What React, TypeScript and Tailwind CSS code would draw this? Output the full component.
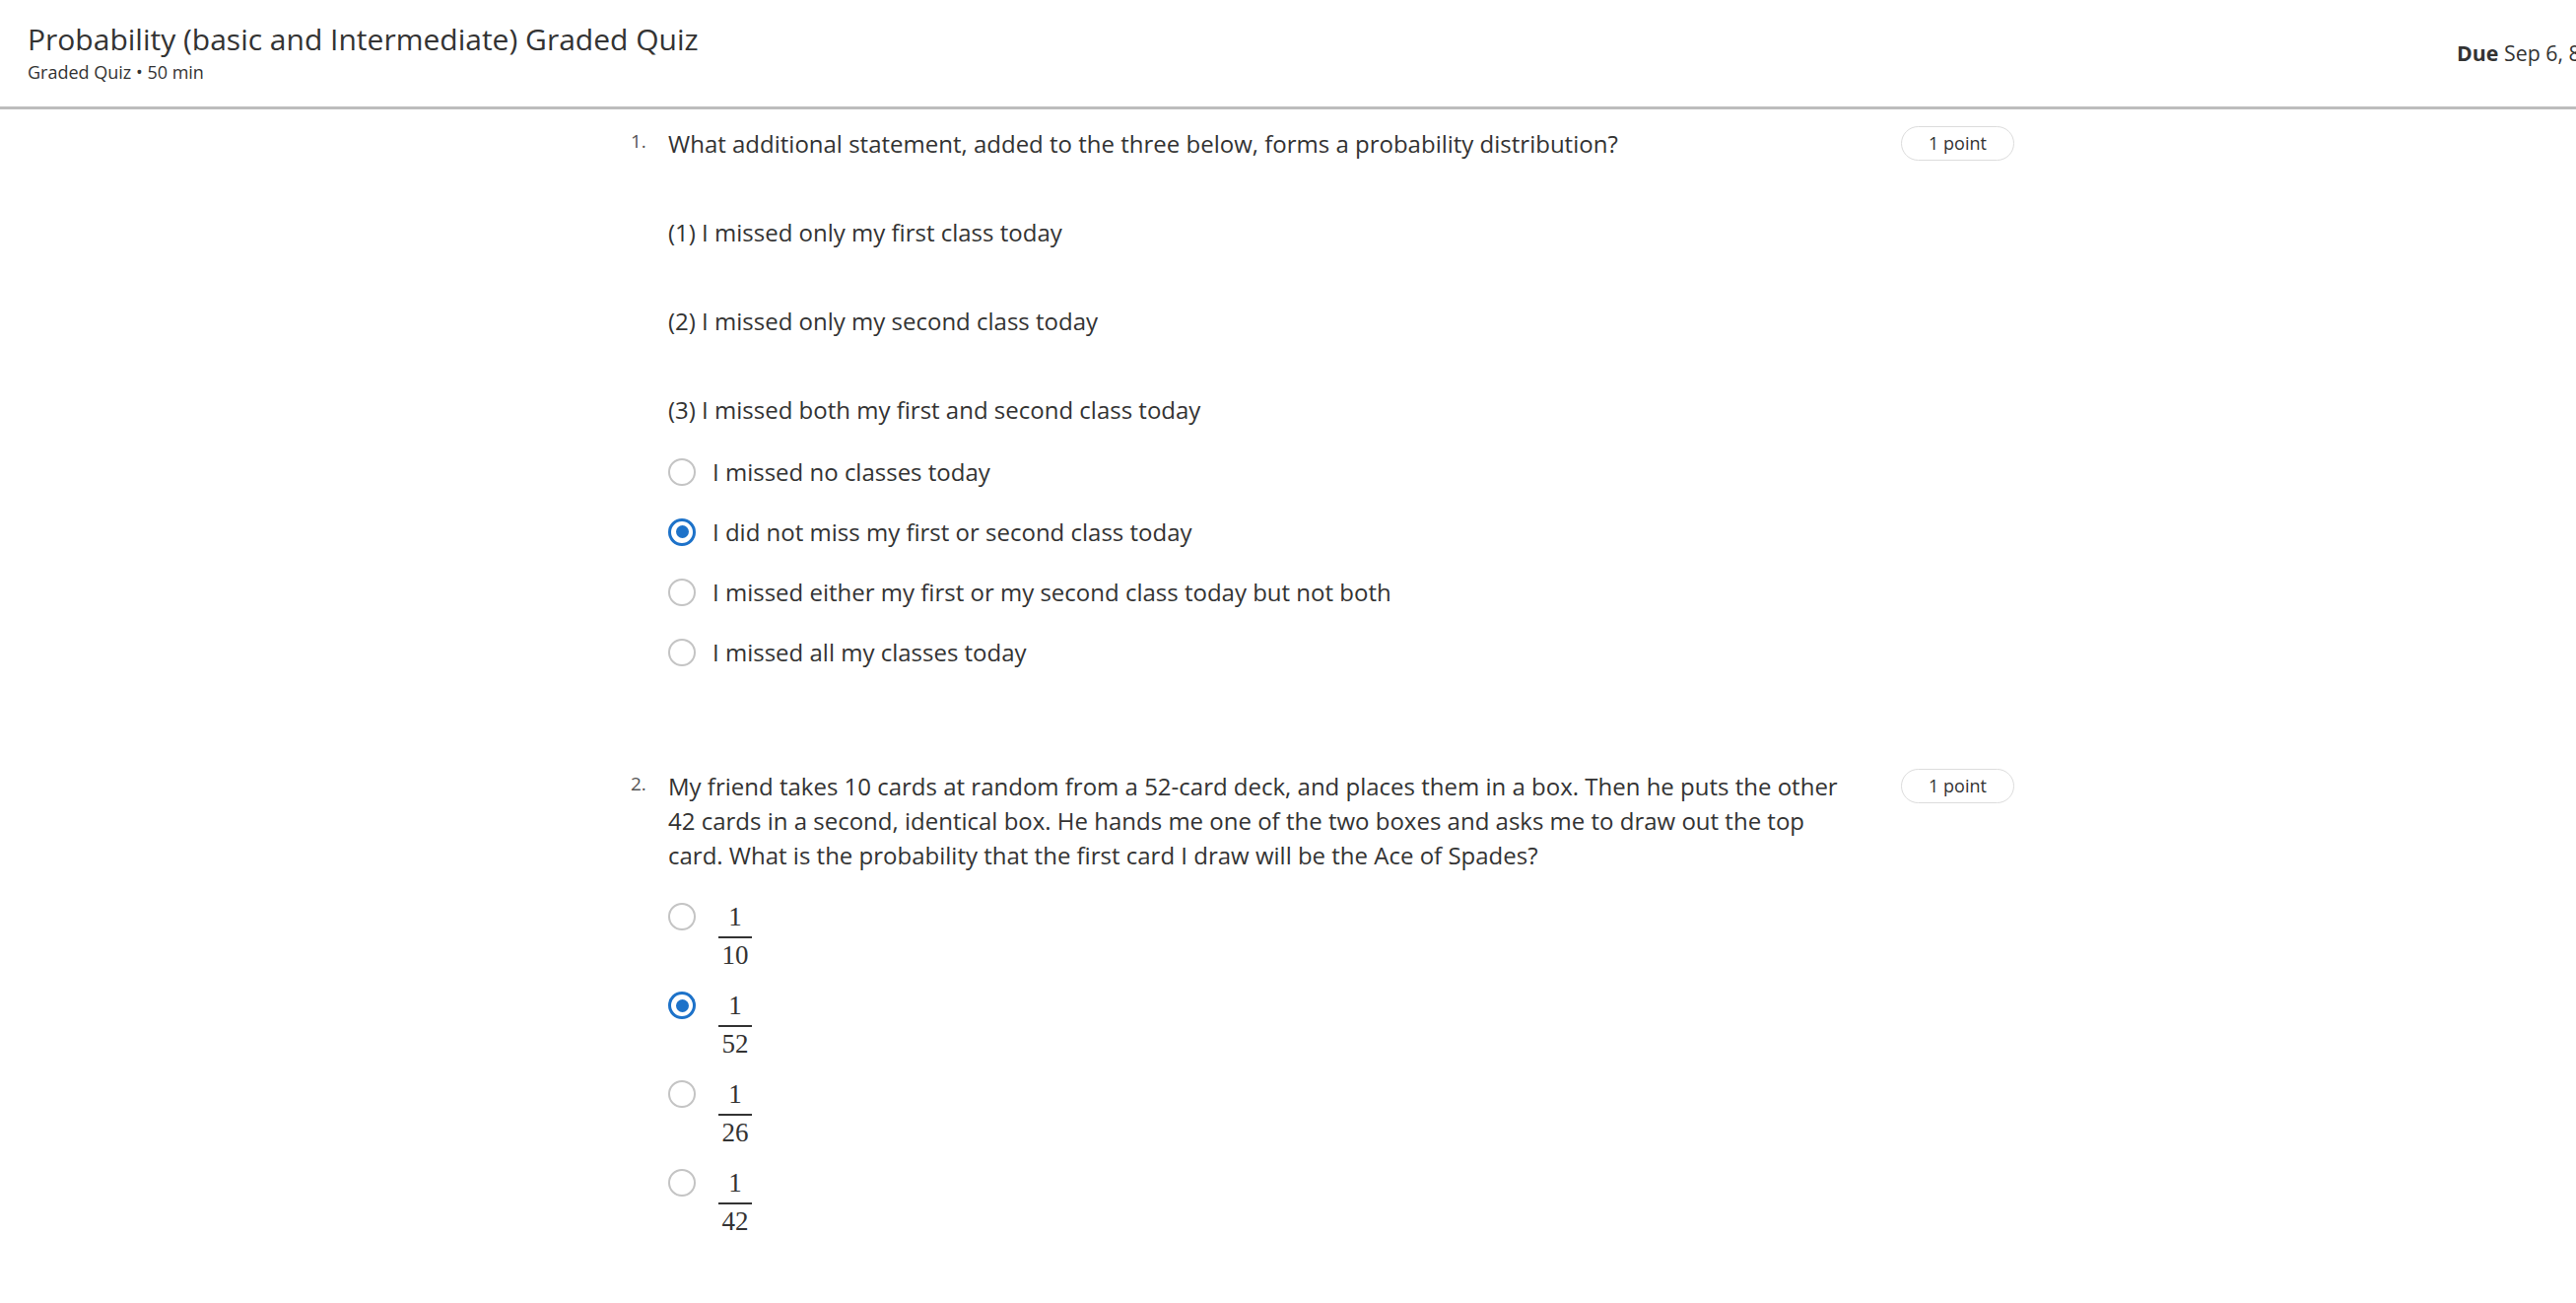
import React from "react";

const Radio = ({ checked }: { checked?: boolean }) =>
  checked ? (
    <div className="w-[28px] h-[28px] shrink-0 rounded-full border-[3px] border-[#1d72c9] flex items-center justify-center">
      <div className="w-[13px] h-[13px] rounded-full bg-[#1d72c9]" />
    </div>
  ) : (
    <div className="w-[28px] h-[28px] shrink-0 rounded-full border-[2.5px] border-[#c4c4c4]" />
  );

const Badge = () => (
  <div className="ml-auto w-[115px] h-[35px] shrink-0 rounded-full border-[1.5px] border-[#dcdcdc] flex items-center justify-center text-[18px] text-[#333]">
    1 point
  </div>
);

const Fraction = ({ d }: { d: string }) => (
  <div className="flex flex-col items-center font-['Liberation_Serif',serif] text-[27px] text-[#333]">
    <div className="leading-[28px]">1</div>
    <div className="w-[34px] h-[2px] bg-[#333] mt-[5.5px]" />
    <div className="leading-[28px] mt-[3px]">{d}</div>
  </div>
);

export default function App() {
  const q1opts = [
    { t: "I missed no classes today" },
    { t: "I did not miss my first or second class today", c: true },
    { t: "I missed either my first or my second class today but not both" },
    { t: "I missed all my classes today" },
  ];
  const q2opts = [
    { d: "10" },
    { d: "52", c: true },
    { d: "26" },
    { d: "42" },
  ];
  return (
    <div className="w-[2614px] h-[1322px] overflow-hidden bg-white font-['Open_Sans',sans-serif] text-[#333]">
      <header className="flex h-[111px] border-b-[3px] border-[#bdbdbd]">
        <div className="flex-1 pl-[28px] pt-[20px]">
          <div className="text-[30px] leading-[40px] text-[#333]">
            Probability (basic and Intermediate) Graded Quiz
          </div>
          <div className="text-[18px] leading-[22px] mt-[2px] text-[#333]">
            Graded Quiz • 50 min
          </div>
        </div>
        <div className="w-[121px] shrink-0 whitespace-nowrap pt-[40px] text-[21.33px] leading-[28px] text-[#333]">
          <span className="font-bold">Due</span> Sep 6, 8
        </div>
      </header>

      <main className="ml-[640px] w-[1404px] pt-[17px]">
        {/* Question 1 */}
        <div className="flex items-start">
          <div className="w-[38px] shrink-0 text-[19px] leading-[30px] text-[#555]">1.</div>
          <div className="w-[1190px]">
            <p className="text-[24px] leading-[35px]">
              What additional statement, added to the three below, forms a probability distribution?
            </p>
            <p className="text-[24px] leading-[35px] mt-[55px]">(1) I missed only my first class today</p>
            <p className="text-[24px] leading-[35px] mt-[55px]">(2) I missed only my second class today</p>
            <p className="text-[24px] leading-[35px] mt-[55px]">(3) I missed both my first and second class today</p>
            <div className="mt-[15px] flex flex-col">
              {q1opts.map((o, i) => (
                <div key={i} className="h-[61px] flex items-center gap-[17px]">
                  <Radio checked={o.c} />
                  <span className="text-[24px] leading-[35px]">{o.t}</span>
                </div>
              ))}
            </div>
          </div>
          <Badge />
        </div>

        {/* Question 2 */}
        <div className="flex items-start mt-[88px]">
          <div className="w-[38px] shrink-0 text-[19px] leading-[30px] text-[#555]">2.</div>
          <div className="w-[1190px]">
            <p className="text-[24px] leading-[35px]">
              My friend takes 10 cards at random from a 52-card deck, and places them in a box. Then he puts the other 42 cards in a second, identical box. He hands me one of the two boxes and asks me to draw out the top card. What is the probability that the first card I draw will be the Ace of Spades?
            </p>
            <div className="mt-[31px] flex flex-col">
              {q2opts.map((o, i) => (
                <div key={i} className="h-[90px] flex items-start gap-[23px]">
                  <Radio checked={o.c} />
                  <Fraction d={o.d} />
                </div>
              ))}
            </div>
          </div>
          <Badge />
        </div>
      </main>
    </div>
  );
}
